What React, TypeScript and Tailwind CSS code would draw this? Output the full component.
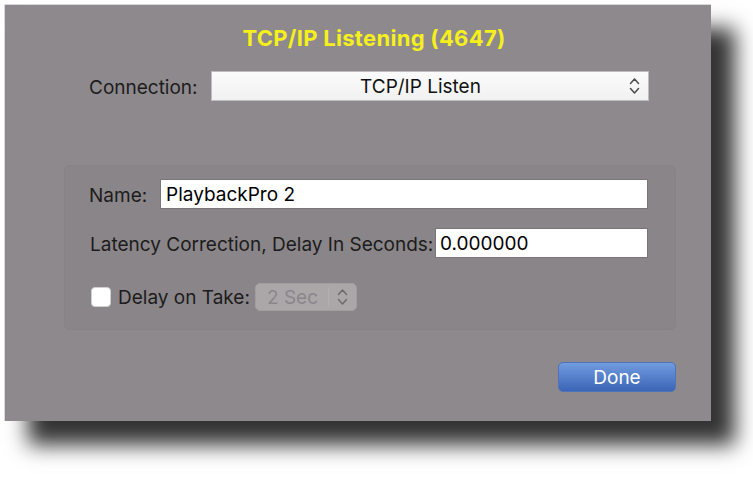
import React from "react";

function UpDown({ color = "#4a4a4a" }: { color?: string }) {
    return (
        <svg width="11" height="18" viewBox="0 0 11 18" fill="none">
            <path d="M1.5 6.5 L5.5 2 L9.5 6.5" stroke={color} strokeWidth="1.5" strokeLinecap="round" strokeLinejoin="round" />
            <path d="M1.5 11.5 L5.5 16 L9.5 11.5" stroke={color} strokeWidth="1.5" strokeLinecap="round" strokeLinejoin="round" />
        </svg>
    );
}

export default function App() {
    const font = { fontFamily: "Inter, 'Liberation Sans', sans-serif" };

    return (
        <div className="w-[753px] h-[499px] bg-white pt-[4px] pl-[4px] overflow-hidden" style={font}>
            {/* ダイアログ本体 */}
            <div className="w-[707px] h-[417px] bg-[#8e898c] border-t border-l border-[#d9d9d9] shadow-[24px_24px_20px_rgba(0,0,0,0.8)] flex flex-col pt-[20px]">
                {/* タイトル */}
                <div className="h-[26px] leading-[26px] text-[22px] font-bold text-[#f5f01c] text-center pl-[32px] tracking-[0.3px]">
                    TCP/IP Listening (4647)
                </div>

                {/* 接続方式 */}
                <div className="mt-[20px] h-[30px] flex items-center pl-[84px]">
                    <span className="w-[122px] pt-[4px] text-[19px] text-[#1c1c1c]">Connection:</span>
                    <div className="w-[438px] h-[30px] flex items-center bg-gradient-to-b from-[#fbfbfb] to-[#f1f1f1] border border-[#bdbdbd]">
                        <span className="flex-1 text-center pt-[3px] text-[19px] text-[#111] pl-[4px]">TCP/IP Listen</span>
                        <span className="pr-[8px] pl-[4px] flex items-center">
                            <UpDown />
                        </span>
                    </div>
                </div>

                {/* 設定グループ */}
                <div className="mt-[64px] ml-[59px] w-[612px] h-[165px] rounded-[6px] bg-[#8a8588] border border-[#878285] pt-[13px]">
                    <div className="h-[30px] flex items-center pl-[24px]">
                        <span className="w-[71px] pt-[4px] text-[19px] text-[#1c1c1c]">Name:</span>
                        <div className="w-[488px] h-[30px] bg-white border border-[#7a7679] flex items-center pl-[5px] pt-[3px] text-[19px] text-black">
                            PlaybackPro 2
                        </div>
                    </div>

                    <div className="mt-[19px] h-[30px] flex items-center pl-[25px]">
                        <span className="w-[345px] pt-[4px] text-[19px] text-[#1c1c1c] whitespace-nowrap">
                            Latency Correction, Delay In Seconds:
                        </span>
                        <div className="w-[213px] h-[30px] bg-white border border-[#7a7679] flex items-center pl-[4px] pt-[3px] text-[19px] text-black">
                            0.000000
                        </div>
                    </div>

                    <div className="mt-[25px] h-[28px] flex items-center pl-[26px]">
                        <div className="w-[20px] h-[20px] rounded-[4px] bg-white border border-[#d0d0d0]" />
                        <span className="ml-[7px] w-[137px] pt-[2px] text-[19px] text-[#1c1c1c]">Delay on Take:</span>
                        <div className="w-[102px] h-[28px] rounded-[5px] bg-[#aba7a9] border border-[#a29ea0] flex items-center">
                            <span className="w-[72px] pl-[11px] pt-[2px] text-[19px] text-[#8a8689]">2 Sec</span>
                            <span className="w-px h-[20px] bg-[#b3afb1]" />
                            <span className="flex-1 flex justify-center">
                                <UpDown color="#6f6b6d" />
                            </span>
                        </div>
                    </div>
                </div>

                {/* 完了ボタン */}
                <div className="mt-[32px] self-end mr-[35px] w-[118px] h-[30px] rounded-[5px] bg-gradient-to-b from-[#719cdf] to-[#3c65b6] border border-[#4d73bb] flex items-center justify-center pt-[2px] text-[19px] text-white">
                    Done
                </div>
            </div>
        </div>
    );
}
